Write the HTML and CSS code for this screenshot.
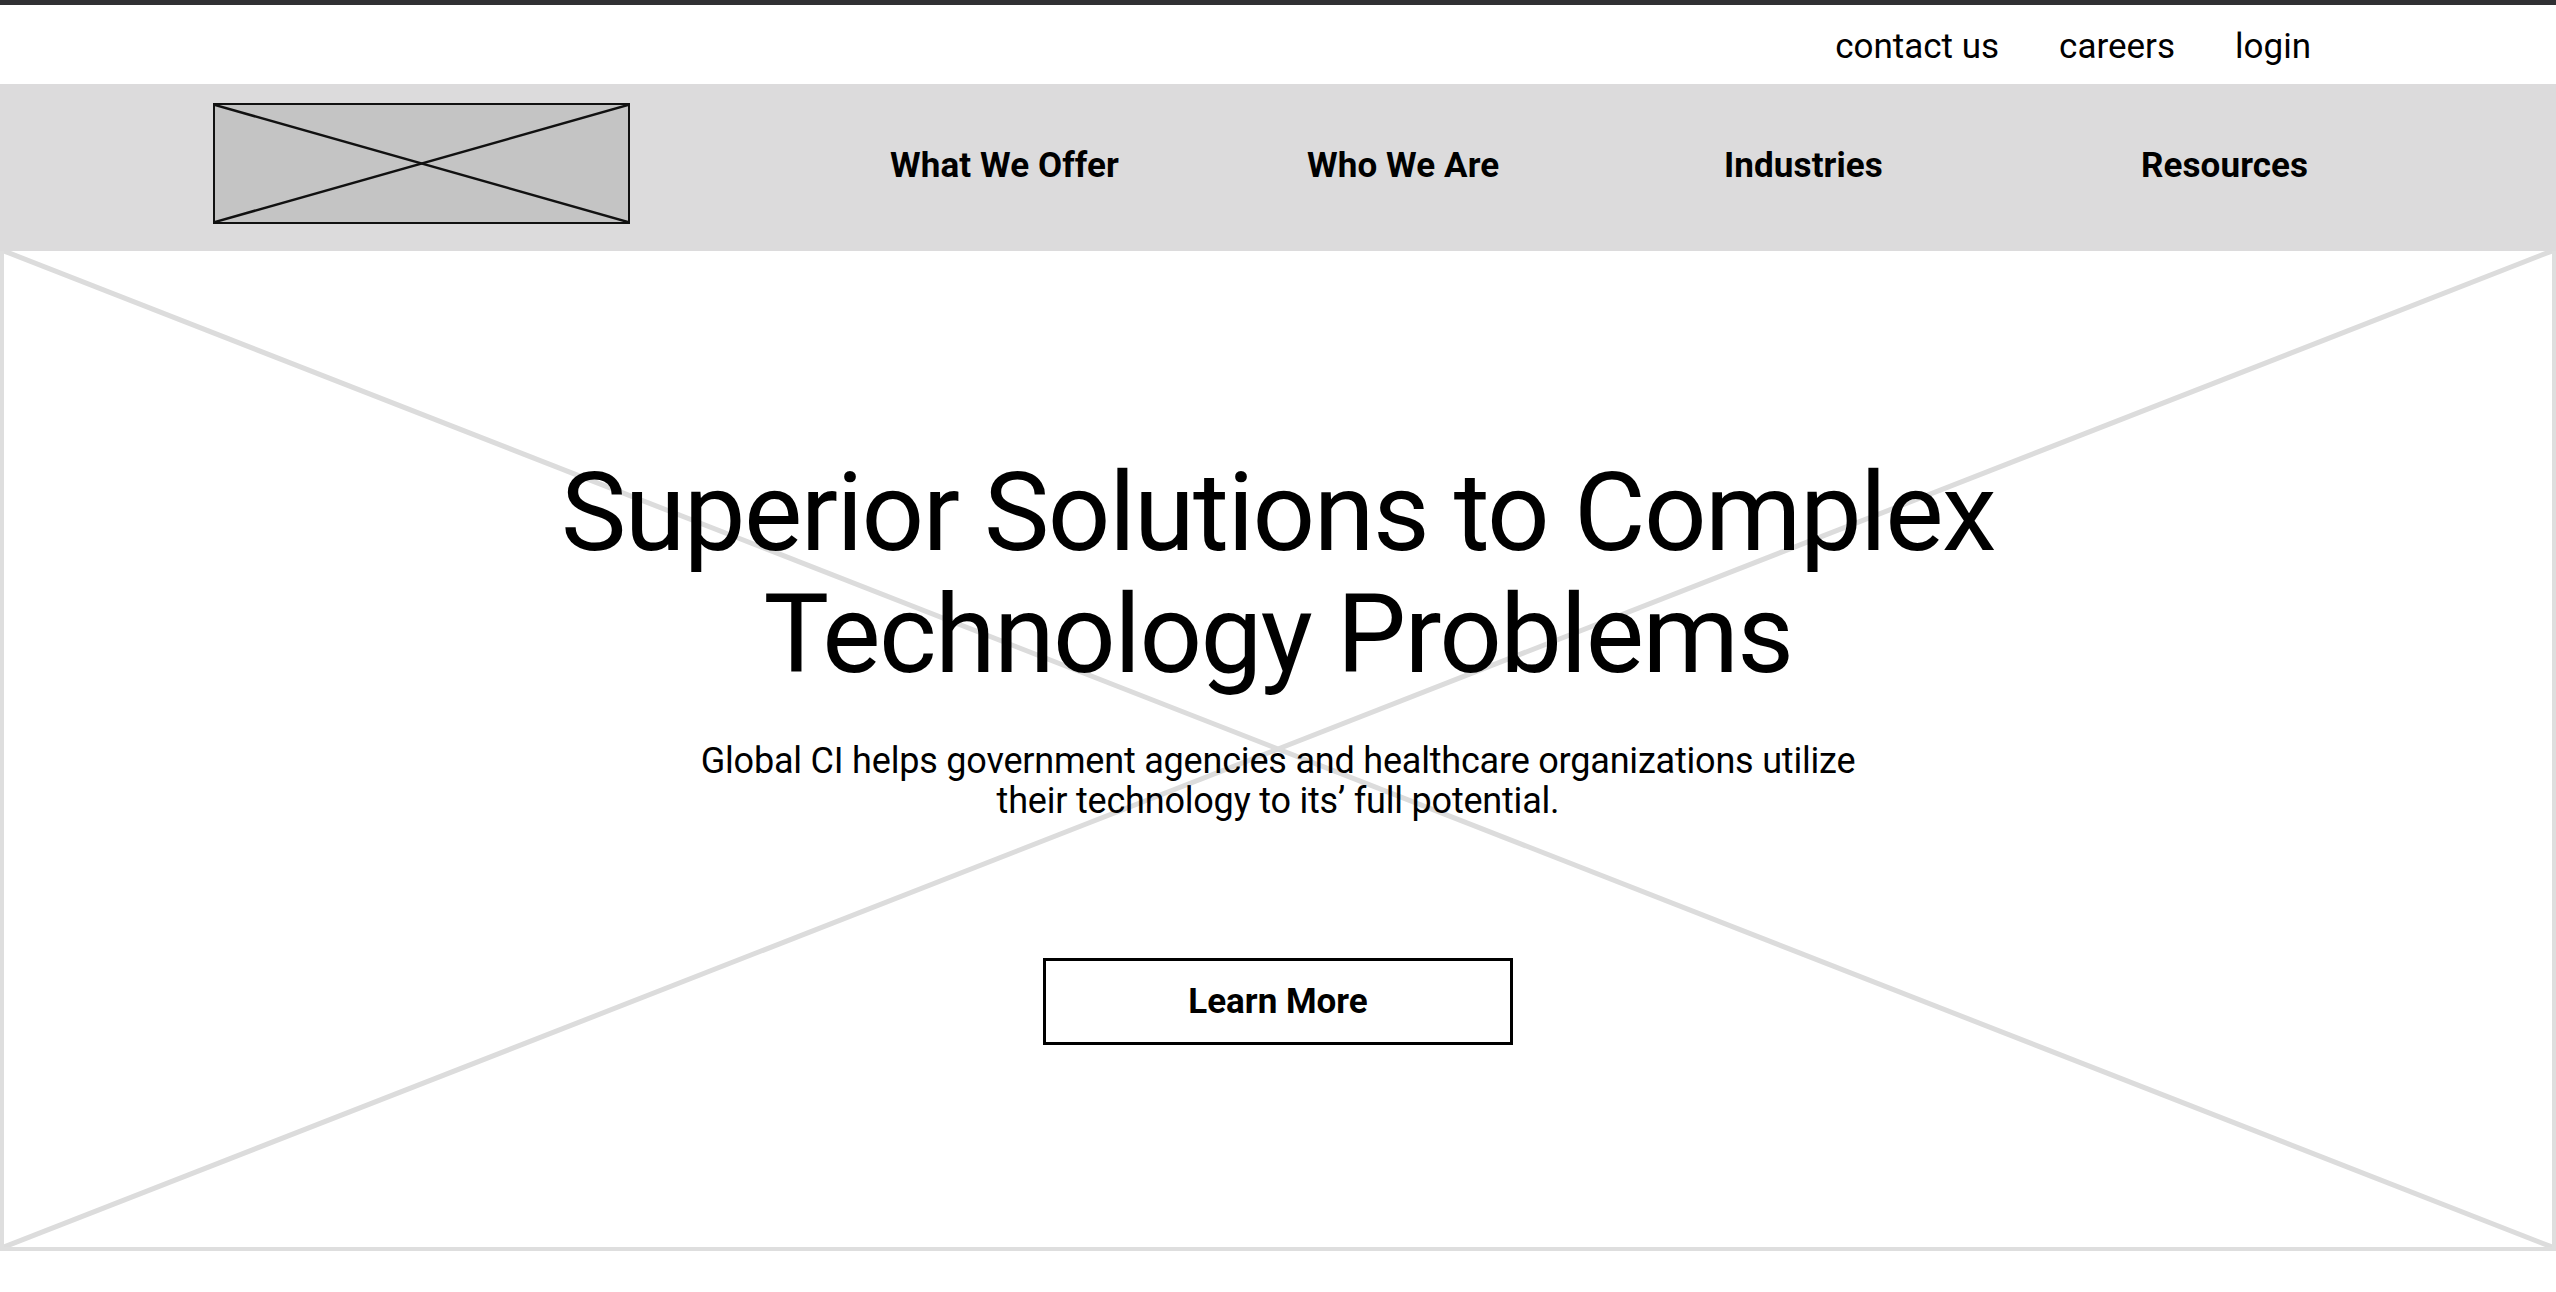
FILE: index.html
```html
<!DOCTYPE html>
<html lang="en">
<head>
<meta charset="utf-8">
<title>Global CI</title>
<link rel="stylesheet" href="styles.css">
</head>
<body>
  <div class="topbar"></div>
  <div class="utility">
    <a class="util-link" href="#">contact us</a>
    <a class="util-link" href="#">careers</a>
    <a class="util-link" href="#">login</a>
  </div>
  <header class="nav">
    <div class="logo">
      <svg class="x-lines" viewBox="0 0 100 100" preserveAspectRatio="none">
        <line x1="0" y1="0" x2="100" y2="100" vector-effect="non-scaling-stroke"/>
        <line x1="100" y1="0" x2="0" y2="100" vector-effect="non-scaling-stroke"/>
      </svg>
    </div>
    <nav class="menu">
      <a class="menu-item" href="#">What We Offer</a>
      <a class="menu-item" href="#">Who We Are</a>
      <a class="menu-item" href="#">Industries</a>
      <a class="menu-item" href="#">Resources</a>
    </nav>
  </header>
  <section class="hero">
    <svg class="hero-x" viewBox="0 0 100 100" preserveAspectRatio="none">
      <line x1="0" y1="0" x2="100" y2="100" vector-effect="non-scaling-stroke"/>
      <line x1="100" y1="0" x2="0" y2="100" vector-effect="non-scaling-stroke"/>
    </svg>
    <div class="hero-content">
      <h1 class="hero-title">Superior Solutions to Complex<br>Technology Problems</h1>
      <p class="hero-sub">Global CI helps government agencies and healthcare organizations utilize<br>their technology to its’ full potential.</p>
      <a class="btn" href="#">Learn More</a>
    </div>
  </section>
</body>
</html>
```

FILE: styles.css
```css
* { box-sizing: border-box; }

html, body {
  margin: 0;
  padding: 0;
  background: #ffffff;
}

body {
  font-family: Roboto, "Liberation Sans", Arial, sans-serif;
  color: #000;
  width: 2556px;
}

a { color: inherit; text-decoration: none; }

.topbar {
  height: 5px;
  background: #303033;
}

.utility {
  height: 79px;
  display: flex;
  justify-content: flex-end;
  align-items: flex-start;
  gap: 60px;
  padding-right: 245px;
  padding-top: 22px;
}

.util-link {
  font-size: 35px;
  line-height: 40px;
  font-weight: 400;
  color: #000;
}

.nav {
  height: 167px;
  background: #dcdbdc;
  display: flex;
  align-items: flex-start;
  padding-left: 213px;
  padding-top: 19px;
}

.logo {
  position: relative;
  width: 417px;
  height: 121px;
  background: #c4c4c4;
  border: 2px solid #111;
  flex: none;
}

.x-lines {
  position: absolute;
  inset: 0;
  width: 100%;
  height: 100%;
}

.x-lines line {
  stroke: #111;
  stroke-width: 2.5;
}

.menu {
  margin-left: 260px;
  display: grid;
  grid-template-columns: 417px 417px 417px auto;
  align-items: center;
  height: 125px;
}

.menu-item {
  font-size: 35px;
  font-weight: 700;
  line-height: 40px;
  color: #000;
  letter-spacing: 0.1px;
}

.hero {
  position: relative;
  height: 1000px;
  border-left: 4px solid #dedede;
  border-right: 4px solid #dedede;
  border-bottom: 4px solid #dedede;
}

.hero-x {
  position: absolute;
  inset: 0;
  width: 100%;
  height: 100%;
}

.hero-x line {
  stroke: #dcdcdc;
  stroke-width: 5;
}

.hero-content {
  position: relative;
  display: flex;
  flex-direction: column;
  align-items: center;
  padding-top: 201px;
  text-align: center;
}

.hero-title {
  margin: 0;
  font-size: 110px;
  line-height: 122px;
  font-weight: 400;
  letter-spacing: -1.6px;
  color: #000;
}

.hero-sub {
  margin: 45px 0 0;
  font-size: 36px;
  line-height: 40px;
  font-weight: 400;
  letter-spacing: -0.2px;
  color: #000;
}

.btn {
  margin-top: 137px;
  width: 470px;
  height: 87px;
  border: 3.5px solid #000;
  display: flex;
  align-items: center;
  justify-content: center;
  font-size: 35px;
  font-weight: 700;
  color: #000;
  background: transparent;
}
```
